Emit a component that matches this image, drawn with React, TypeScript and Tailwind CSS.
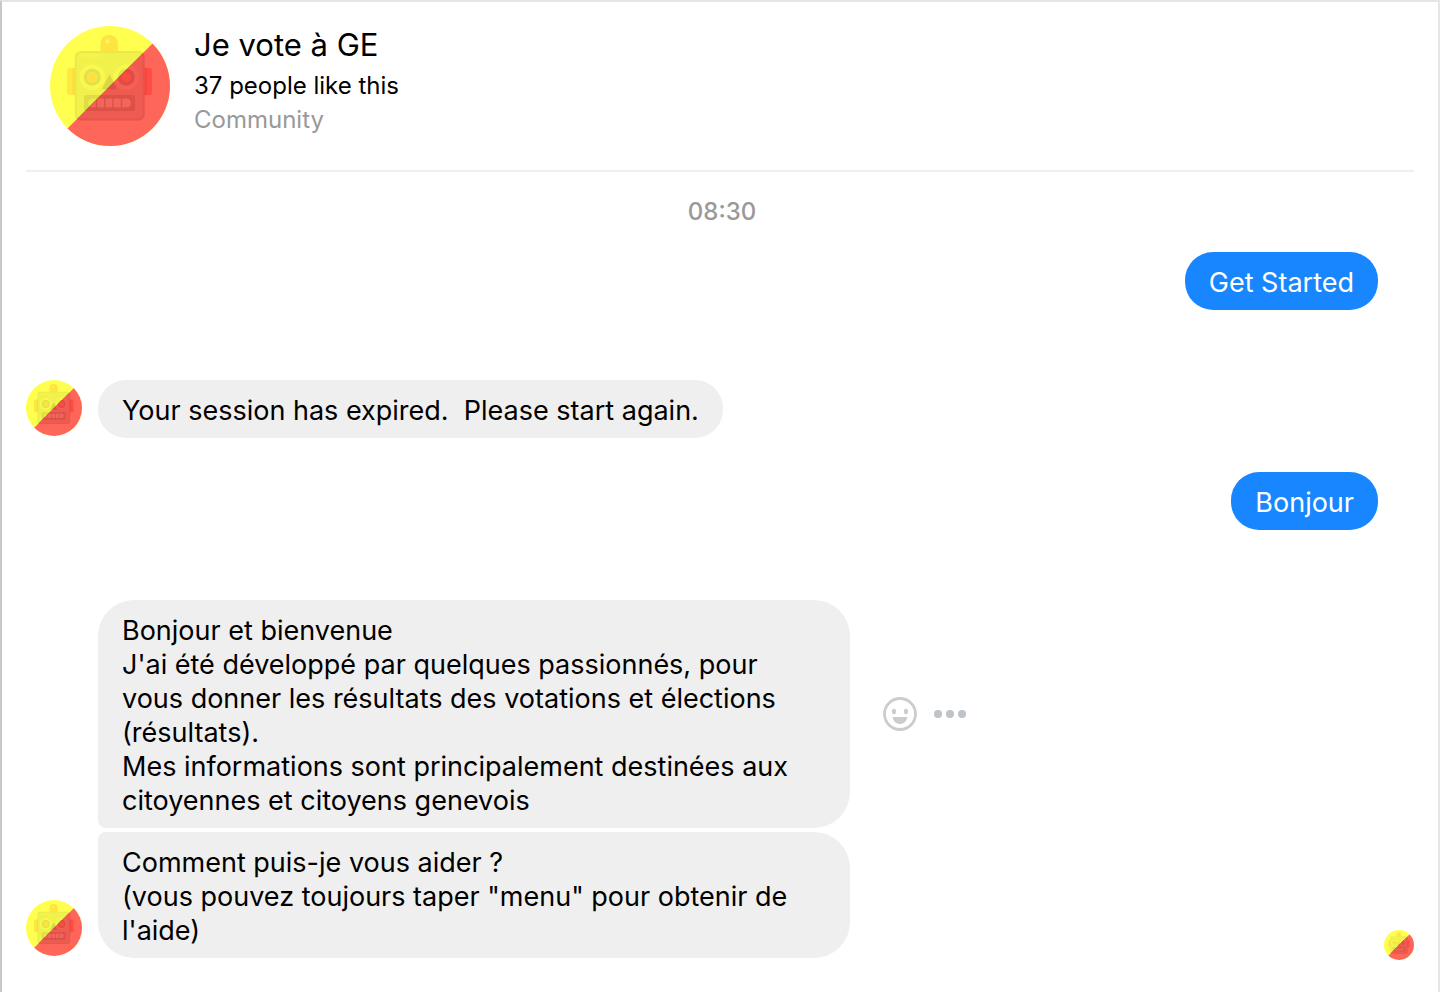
import { useId, type ReactNode } from 'react';

type Palette = {
  field: string;
  ear: string;
  earEdge: string;
  antenna: string;
  shine: string;
  head: string;
  headEdge: string;
  eye: string;
  ring: string;
  iris: string;
  pupil: string;
  nose: string;
  mouth: string;
  teeth: string;
};

const yellow: Palette = {
  field: '#ffff50',
  ear: '#ffe840',
  earEdge: '#fbdc40',
  antenna: '#ffe441',
  shine: '#fff565',
  head: '#f0f14b',
  headEdge: '#e9ea49',
  eye: '#f8f850',
  ring: '#e3e147',
  iris: '#f1e94a',
  pupil: '#ffe03f',
  nose: '#dcd544',
  mouth: '#e0dc46',
  teeth: '#eeea4c',
};

const red: Palette = {
  field: '#ff665a',
  ear: '#ff4d45',
  earEdge: '#fa453d',
  antenna: '#ff5046',
  shine: '#ff7064',
  head: '#ee5b50',
  headEdge: '#e6554b',
  eye: '#f65f54',
  ring: '#dd4d44',
  iris: '#ec4c43',
  pupil: '#fc4d44',
  nose: '#da4f46',
  mouth: '#dc5046',
  teeth: '#f0665b',
};

function Robot({ colors }: { colors: Palette }) {
  return (
    <>
      <rect width="120" height="120" fill={colors.field} />
      <rect x="17" y="42" width="14" height="27" rx="2.500" fill={colors.ear} />
      <rect x="88" y="42" width="14" height="27" rx="2.500" fill={colors.ear} />
      <path d="M22.500 42h3v27h-3zM94 42h3v27h-3z" fill={colors.earEdge} />
      <path d="M50.500 27V17.500a8.700 8.700 0 0 1 17.400 0V27Z" fill={colors.antenna} />
      <circle cx="57.500" cy="15.500" r="2.200" fill={colors.shine} />
      <rect x="25.700" y="26" width="68" height="67.500" rx="5" fill={colors.head} stroke={colors.headEdge} strokeWidth="2" />
      <path d="M31 30H50" stroke={colors.eye} strokeWidth="3" strokeLinecap="round" strokeOpacity="0.5" />
      {[42.3, 76.3].map((cx) => (
        <g key={cx}>
          <circle cx={cx} cy="51.300" r="12.700" fill={colors.eye} />
          <circle cx={cx} cy="51.300" r="7" fill={colors.iris} stroke={colors.ring} strokeWidth="3" />
          <circle cx={cx} cy="51.300" r="4.200" fill={colors.pupil} />
        </g>
      ))}
      <path d="M59.500 49.500 66 62.500H53Z" fill={colors.nose} stroke={colors.nose} strokeWidth="1.500" strokeLinejoin="round" />
      <rect x="34" y="69" width="51" height="16" rx="2.500" fill={colors.mouth} />
      <rect x="38" y="72.500" width="43" height="9" rx="4.500" fill={colors.teeth} />
      <path d="M46.500 72V82M54.700 72V82M63 72V82M71.500 72V82" stroke={colors.mouth} strokeWidth="1.400" />
    </>
  );
}

function Avatar({ className }: { className: string }) {
  const clip = useId();
  return (
    <svg viewBox="0 0 120 120" className={`shrink-0 rounded-full ${className}`} role="img" aria-label="Je vote à GE">
      <clipPath id={clip}>
        <path d="M120 0V120H0Z" />
      </clipPath>
      <Robot colors={yellow} />
      <g clipPath={`url(#${clip})`}>
        <Robot colors={red} />
      </g>
    </svg>
  );
}

function Incoming({ corners, children }: { corners: string; children: ReactNode }) {
  return <div className={`bg-[#efefef] px-6 pt-[14px] pb-[10px] ${corners}`}>{children}</div>;
}

function Outgoing({ children }: { children: ReactNode }) {
  return (
    <div className="flex justify-end pr-9">
      <p className="rounded-[28px] bg-[#1887ff] px-6 pt-[14px] pb-[10px] text-white">{children}</p>
    </div>
  );
}

export default function App() {
  return (
    <main className="min-h-screen border-2 border-b-0 border-[#e5e5e5] border-l-[#c8c8c8] bg-white px-6 font-['Inter','Liberation_Sans',sans-serif] text-black">
      <header className="flex gap-6 border-b-2 border-[#f0f0f0] p-6">
        <Avatar className="size-[120px]" />
        <div>
          <h1 className="mb-[5px] text-[31px] leading-[38px]">Je vote à GE</h1>
          <p className="text-2xl leading-[34px]">37 people like this</p>
          <p className="text-2xl leading-[34px] text-[#999999]">Community</p>
        </div>
      </header>

      <section aria-label="Conversation" className="text-[27px] leading-[34px]">
        <p className="py-6 pl-1 text-center text-2xl leading-8 font-medium text-[#999999]">
          <time>08:30</time>
        </p>

        <Outgoing>Get Started</Outgoing>

        <div className="mt-[70px] flex items-start gap-4">
          <Avatar className="size-14" />
          <Incoming corners="rounded-[28px]">
            <p className="whitespace-pre-wrap">Your session has expired.{'  '}Please start again.</p>
          </Incoming>
        </div>

        <div className="mt-[34px]">
          <Outgoing>Bonjour</Outgoing>
        </div>

        <div className="mt-[70px] flex items-center gap-8 pl-[72px]">
          <div className="w-full max-w-[752px]">
            <Incoming corners="rounded-[36px] rounded-bl-lg">
              <p>Bonjour et bienvenue</p>
              <p>
                J'ai été développé par quelques passionnés, pour vous donner les résultats des votations et élections
                (résultats).
              </p>
              <p>Mes informations sont principalement destinées aux citoyennes et citoyens genevois</p>
            </Incoming>
          </div>
          <div className="flex shrink-0 items-center gap-4">
            <button type="button" aria-label="React">
              <svg viewBox="0 0 36 36" className="block size-9">
                <circle cx="18" cy="18" r="15.500" fill="none" stroke="#cccccc" strokeWidth="2.800" />
                <ellipse cx="12" cy="15.500" rx="2.100" ry="2.700" fill="#cccccc" />
                <ellipse cx="24" cy="15.500" rx="2.100" ry="2.700" fill="#cccccc" />
                <path d="M11.500 21H24.500C25.200 21 25.500 21.500 25.300 22C24.200 25.800 21.500 28 18 28S11.800 25.800 10.700 22C10.500 21.500 10.800 21 11.500 21Z" fill="#cccccc" />
              </svg>
            </button>
            <button type="button" aria-label="More">
              <svg viewBox="0 0 32 32" className="block size-8" fill="#bec3c9">
                <circle cx="4" cy="16" r="4" />
                <circle cx="16" cy="16" r="4" />
                <circle cx="28" cy="16" r="4" />
              </svg>
            </button>
          </div>
        </div>

        <div className="mt-1 flex items-end gap-4">
          <div className="shrink-0 pb-[2px]">
            <Avatar className="block size-14" />
          </div>
          <div className="w-full max-w-[752px]">
            <Incoming corners="rounded-[36px] rounded-tl-lg">
              <p>Comment puis-je vous aider ?</p>
              <p>(vous pouvez toujours taper "menu" pour obtenir de l'aide)</p>
            </Incoming>
          </div>
          <div className="-mb-[2px] ml-auto">
            <Avatar className="block size-[30px]" />
          </div>
        </div>
      </section>
    </main>
  );
}
